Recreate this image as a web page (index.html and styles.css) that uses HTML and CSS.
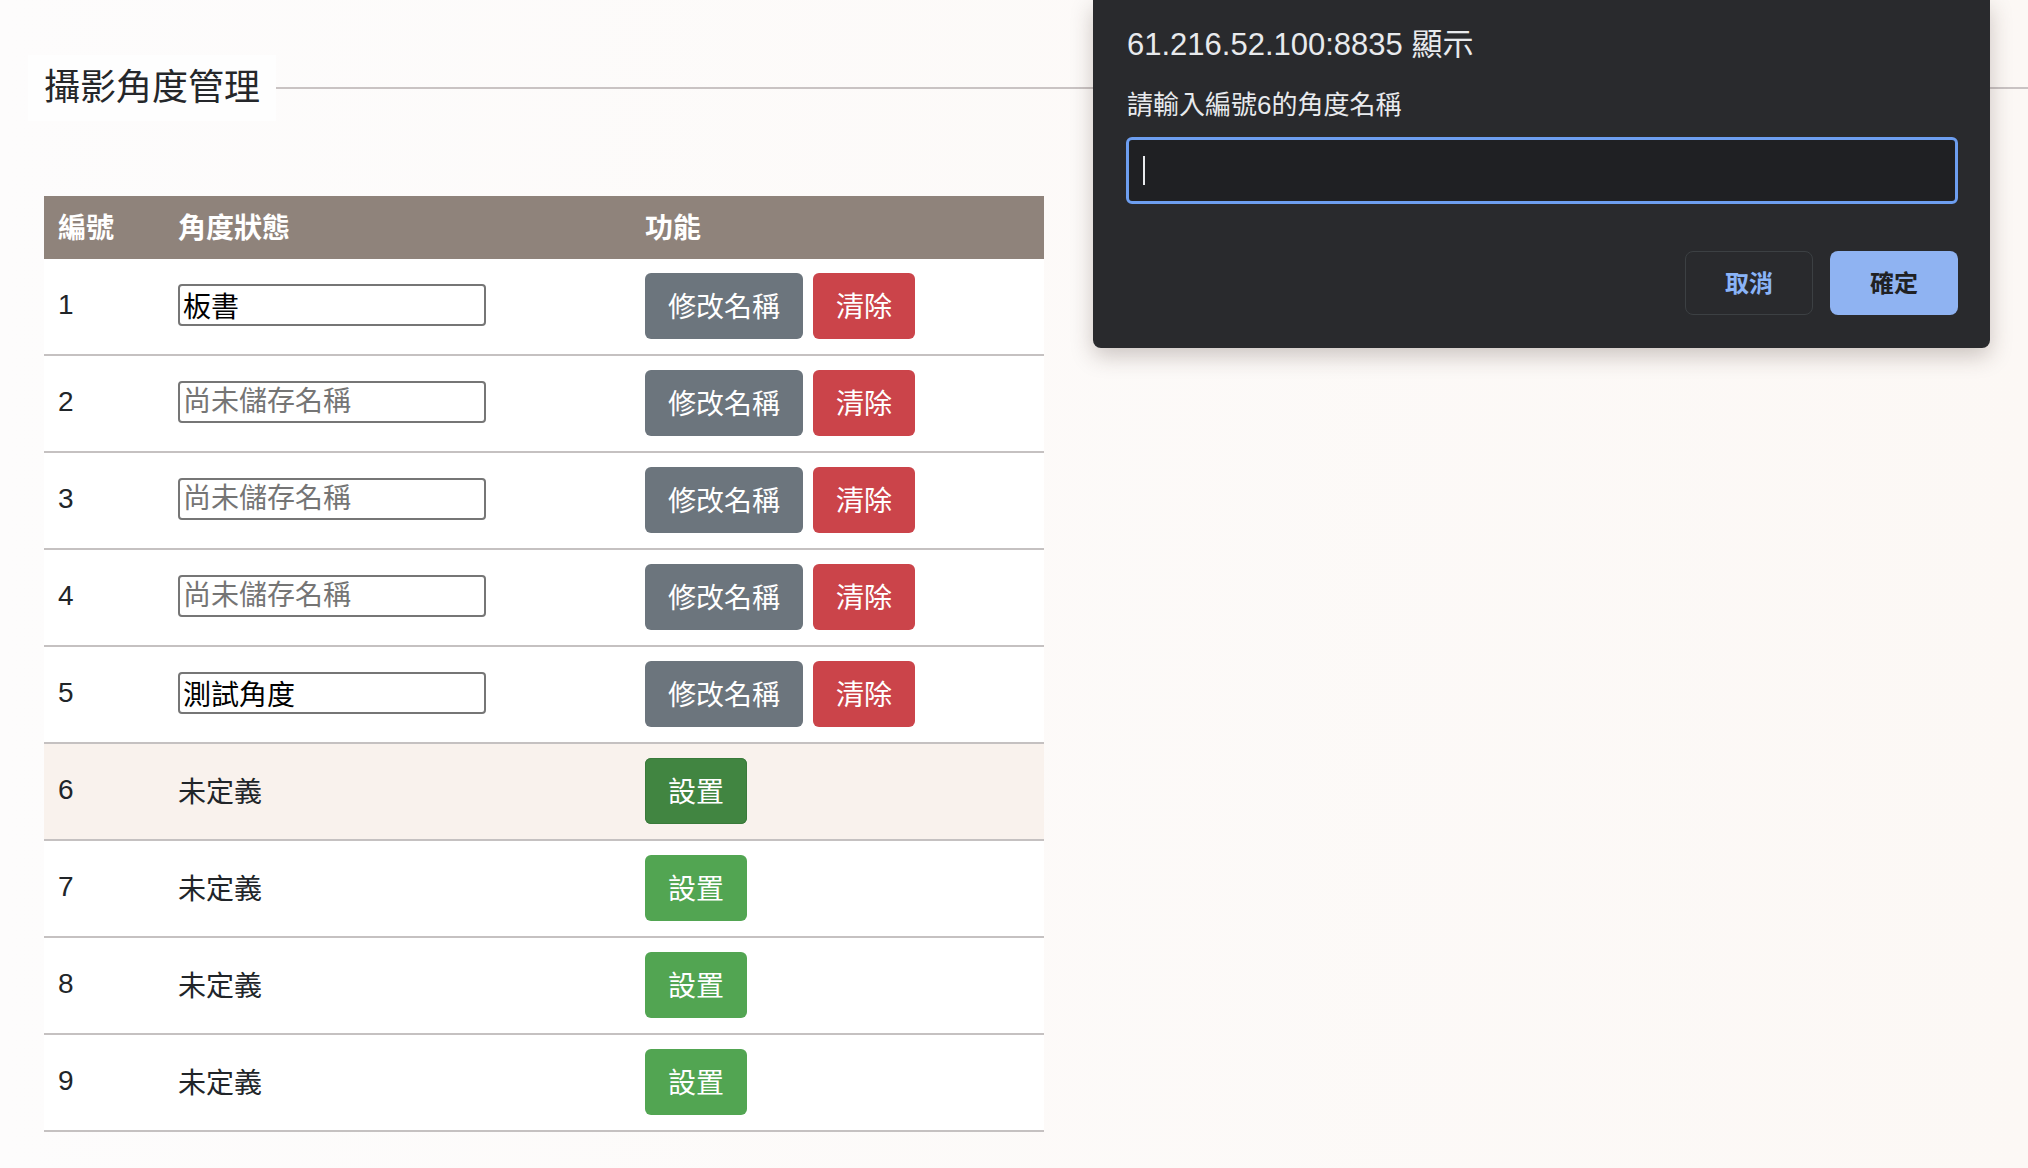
FILE: index.html
```html
<!DOCTYPE html>
<html lang="zh-Hant">
<head>
  <meta charset="UTF-8" />
  <meta name="viewport" content="width=device-width, initial-scale=1.0" />
  <title>攝影角度管理</title>
  <link rel="stylesheet" href="styles.css">
</head>
<body>

  <!-- 標題 -->
  <div class="titulo">
    <h2>攝影角度管理</h2>
    <div class="linea"></div>
  </div>

  <table class="angulos">
    <tr>
      <th class="col-num">編號</th>
      <th class="col-estado">角度狀態</th>
      <th>功能</th>
    </tr>
    <tr>
      <td>1</td>
      <td><input type="text" value="板書" placeholder="尚未儲存名稱" /></td>
      <td><div class="acciones"><button class="btn btn-gris">修改名稱</button><button class="btn btn-rojo">清除</button></div></td>
    </tr>
    <tr>
      <td>2</td>
      <td><input type="text" placeholder="尚未儲存名稱" /></td>
      <td><div class="acciones"><button class="btn btn-gris">修改名稱</button><button class="btn btn-rojo">清除</button></div></td>
    </tr>
    <tr>
      <td>3</td>
      <td><input type="text" placeholder="尚未儲存名稱" /></td>
      <td><div class="acciones"><button class="btn btn-gris">修改名稱</button><button class="btn btn-rojo">清除</button></div></td>
    </tr>
    <tr>
      <td>4</td>
      <td><input type="text" placeholder="尚未儲存名稱" /></td>
      <td><div class="acciones"><button class="btn btn-gris">修改名稱</button><button class="btn btn-rojo">清除</button></div></td>
    </tr>
    <tr>
      <td>5</td>
      <td><input type="text" value="測試角度" placeholder="尚未儲存名稱" /></td>
      <td><div class="acciones"><button class="btn btn-gris">修改名稱</button><button class="btn btn-rojo">清除</button></div></td>
    </tr>
    <tr class="activa">
      <td>6</td>
      <td>未定義</td>
      <td><div class="acciones"><button class="btn btn-verde">設置</button></div></td>
    </tr>
    <tr>
      <td>7</td>
      <td>未定義</td>
      <td><div class="acciones"><button class="btn btn-verde">設置</button></div></td>
    </tr>
    <tr>
      <td>8</td>
      <td>未定義</td>
      <td><div class="acciones"><button class="btn btn-verde">設置</button></div></td>
    </tr>
    <tr>
      <td>9</td>
      <td>未定義</td>
      <td><div class="acciones"><button class="btn btn-verde">設置</button></div></td>
    </tr>
  </table>

  <!-- prompt() del navegador -->
  <div class="dialogo">
    <div class="dialogo-titulo">61.216.52.100:8835 顯示</div>
    <div class="dialogo-mensaje">請輸入編號6的角度名稱</div>
    <div class="dialogo-input"><span class="cursor"></span></div>
    <div class="dialogo-botones">
      <button class="dbtn dbtn-cancelar">取消</button>
      <button class="dbtn dbtn-ok">確定</button>
    </div>
  </div>

</body>
</html>
```

FILE: styles.css
```css
:root {
  --cafe: #8f837b;
  --borde: #c5c1c1;
  --fuente: "Liberation Sans", "Noto Sans CJK TC", sans-serif;
}
body {
  margin: 0;
  padding: 0 0 0 44px;
  font-family: var(--fuente);
  background: linear-gradient(90deg, #fdfcfc, #fcf8f5);
  color: #212529;
  min-height: 1168px;
}
.titulo {
  display: flex;
  align-items: center;
  margin-top: 55px;
}
.titulo h2 {
  margin: 0 0 0 -16px;
  padding: 0 16px;
  font-size: 36px;
  font-weight: 400;
  line-height: 66px;
  background: #fefefe;
  color: #25272a;
}
.linea {
  flex: 1;
  height: 2px;
  background: #c9c3c3;
}
.angulos {
  width: 1000px;
  border-collapse: collapse;
  margin-top: 75px;
  background: #fff;
  font-size: 28px;
}
.angulos th {
  background: var(--cafe);
  color: #fff;
  text-align: left;
  font-weight: bold;
  height: 59px;
  padding: 0 14px 4px;
}
.col-num {
  width: 92px;
}
.col-estado {
  width: 439px;
}
.angulos td {
  height: 92px;
  padding: 0 14px 3px;
  border-bottom: 2px solid var(--borde);
  color: #212529;
}
.angulos tr.activa td {
  background: #f9f2ed;
}
.angulos input {
  box-sizing: border-box;
  width: 308px;
  height: 42px;
  margin: 0;
  padding: 0 3px;
  font-family: var(--fuente);
  font-size: 28px;
  color: #000;
  border: 2px solid #767676;
  border-radius: 4px;
  vertical-align: middle;
}
.angulos input::placeholder {
  color: #757575;
}
.acciones {
  display: flex;
  gap: 10px;
  margin-top: 2px;
}
.btn {
  height: 66px;
  padding: 0 23px 3px;
  border: none;
  border-radius: 6px;
  font-family: var(--fuente);
  font-size: 28px;
  color: #fff;
  cursor: pointer;
}
.btn-gris {
  background: #6c757d;
}
.btn-rojo {
  background: #cb444a;
}
.btn-verde {
  background: #52a552;
}
.activa .btn-verde {
  background: #418541;
  box-shadow: inset 0 0 0 1px #3a7a3b;
}

/* dialogo */
.dialogo {
  position: absolute;
  top: 0;
  left: 1093px;
  width: 897px;
  height: 348px;
  box-sizing: border-box;
  padding: 0 32px 0 34px;
  background: #292a2d;
  border-radius: 0 0 8px 8px;
  box-shadow: 0 8px 22px rgba(60, 40, 30, 0.25);
  color: #e8eaed;
  display: flex;
  flex-direction: column;
}
.dialogo-titulo {
  font-size: 31px;
  line-height: 36px;
  margin-top: 27px;
}
.dialogo-mensaje {
  font-size: 26px;
  line-height: 32px;
  margin-top: 26px;
}
.dialogo-input {
  margin: 16px 0 0 -1px;
  height: 67px;
  box-sizing: border-box;
  border: 3px solid #6d9ef0;
  border-radius: 6px;
  background: #1f2023;
  display: flex;
  align-items: center;
  padding-left: 14px;
}
.cursor {
  width: 2px;
  height: 29px;
  background: #e8eaed;
}
.dialogo-botones {
  display: flex;
  justify-content: flex-end;
  gap: 17px;
  margin-top: 47px;
}
.dbtn {
  width: 128px;
  height: 64px;
  padding-bottom: 4px;
  border-radius: 8px;
  font-family: var(--fuente);
  font-size: 24px;
  font-weight: bold;
}
.dbtn-cancelar {
  background: transparent;
  border: 1px solid #3c4043;
  color: #8ab4f8;
}
.dbtn-ok {
  background: #8fb3f2;
  border: none;
  color: #202124;
}
```
